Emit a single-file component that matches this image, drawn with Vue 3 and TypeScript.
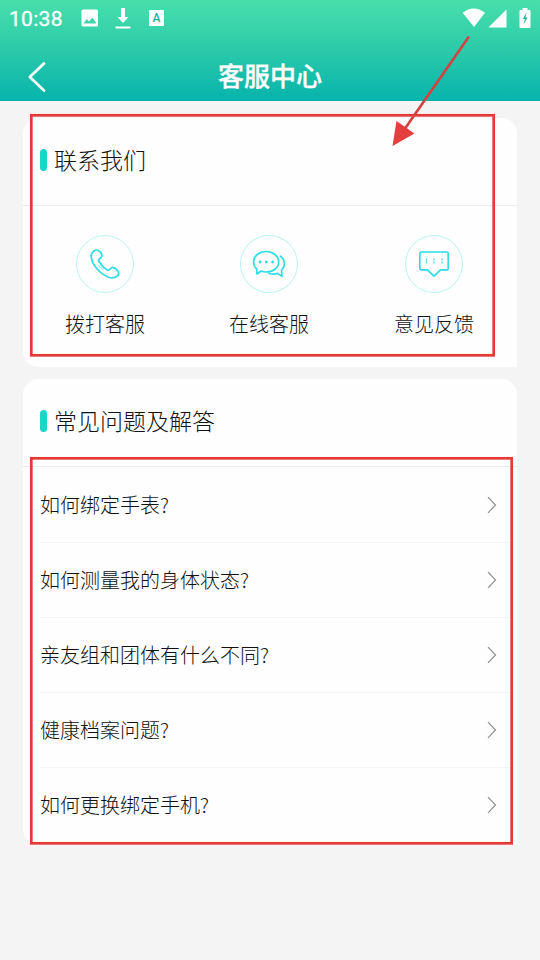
<script setup lang="ts">
interface Contact {
  label: string
  icon: 'phone' | 'chat' | 'feedback'
}

const contacts: Contact[] = [
  { label: '拨打客服', icon: 'phone' },
  { label: '在线客服', icon: 'chat' },
  { label: '意见反馈', icon: 'feedback' },
]

const questions: string[] = [
  '如何绑定手表?',
  '如何测量我的身体状态?',
  '亲友组和团体有什么不同?',
  '健康档案问题?',
  '如何更换绑定手机?',
]
</script>

<template>
  <div class="page">
    <header class="top">
      <div class="status">
        <span class="time">10:38</span>
        <svg class="s-image" width="18" height="18" viewBox="0 0 18 18">
          <path fill="#fff" fill-rule="evenodd" d="M2 .5h13.500a1.500 1.500 0 0 1 1.500 1.500v14a1.500 1.500 0 0 1-1.500 1.500H2A1.500 1.500 0 0 1 .5 16V2A1.500 1.500 0 0 1 2 .5zM2.500 14.500h13l-4.200-6-3.300 4-2.200-2.500z" />
        </svg>
        <svg class="s-down" width="16" height="21" viewBox="0 0 16 21">
          <path fill="#fff" d="M6 0h4v9h3.500L8 15 2.500 9H6zM.5 18.500h15v2H.5z" />
        </svg>
        <span class="s-letter">A</span>
        <span class="grow"></span>
        <svg class="s-wifi" width="24" height="20" viewBox="0 0 24 20">
          <path fill="#fff" d="M.7 4.800Q11.500-3.800 23 4.800L12 19z" />
        </svg>
        <svg class="s-signal" width="19" height="19" viewBox="0 0 19 19">
          <path fill="#fff" d="M18.500.5v18H.3z" />
        </svg>
        <svg class="s-battery" width="12" height="21" viewBox="0 0 12 21">
          <path fill="#fff" d="M3.500 0h5v2H10.500q1 0 1 1v16q0 1-1 1H1.500q-1 0-1-1V3q0-1 1-1h2z" />
          <path fill="#28b99b" d="M7.500 4.500 3.800 11h2L4.700 16.500 8.600 9.500H6.500z" />
        </svg>
      </div>
      <div class="nav">
        <svg class="back" width="20" height="32" viewBox="0 0 20 32">
          <path d="M17 2.500 2.800 16 17 29.500" fill="none" stroke="#fff" stroke-width="2.700" stroke-linecap="round" stroke-linejoin="round" />
        </svg>
        <h1>客服中心</h1>
      </div>
    </header>

    <main>
      <section class="card contact">
        <h2><i class="mark"></i><span>联系我们</span></h2>
        <div class="contacts">
          <div v-for="c in contacts" :key="c.icon" class="item">
            <span class="ring">
              <svg v-if="c.icon === 'phone'" width="32" height="32" viewBox="0 0 32 32">
                <path class="line" d="M7.200 2C4.500 2.500 2.200 5.500 2.200 8.500c.5 8 8.500 17.300 17.300 20.700 4 1.400 9.500.2 10.200-3.500.3-2.500-3.500-6-6-6.400-2-.2-2.500 2.600-4.700 3.200C16.500 21.500 11 15.500 9.500 12.500c.4-2 3.600-2.800 3.500-5C12.700 5 9.800 1.700 7.200 2z" />
                <path class="thin" d="m9 17 4.800 5M11.500 17l3.500 4" />
              </svg>
              <svg v-else-if="c.icon === 'chat'" width="34" height="30" viewBox="0 0 34 30">
                <path class="line" d="M4.800 20C2.500 18 1.600 15.500 1.600 13 1.600 7 7.200 2.500 14 2.500S26.700 7 26.700 13 21 23 14 23c-1.800 0-3.300-.3-4.800-1L5 25z" />
                <path class="line" d="M28.500 7.200c3 2.500 4.200 5.500 3.800 9-.2 2-1.200 3.700-2.800 5l.5 6-4.500-2.800c-3 .9-6 .8-8.500.1" />
                <g fill="#2ddce5"><circle cx="8" cy="13" r="1.400" /><circle cx="14.300" cy="13" r="1.400" /><circle cx="20.600" cy="13" r="1.400" /></g>
              </svg>
              <svg v-else width="32" height="30" viewBox="0 0 32 30">
                <path class="line" d="M3.500 3h25q1.700 0 1.700 1.700v14.500q0 1.700-1.700 1.700H22.500L16 27.200 9.500 20.900h-6q-1.700 0-1.700-1.700V4.700Q1.800 3 3.500 3z" />
                <path class="dashes" d="M8.500 9.500v5M16 9.500v5M24 9.500v5" />
              </svg>
            </span>
            <span class="label">{{ c.label }}</span>
          </div>
        </div>
      </section>

      <section class="card faq">
        <h2><i class="mark"></i><span>常见问题及解答</span></h2>
        <ul>
          <li v-for="q in questions" :key="q">
            <span>{{ q }}</span>
            <svg width="10" height="18" viewBox="0 0 10 18">
              <path d="M1 1.200 8.600 9 1 16.800" fill="none" stroke="#8b8b8b" stroke-width="1.100" />
            </svg>
          </li>
        </ul>
      </section>
    </main>

    <svg class="annotations" width="540" height="960" viewBox="0 0 540 960">
      <g fill="none" stroke="#e53935" stroke-width="2.700">
        <rect x="31.300" y="115.300" width="462.400" height="240" />
        <rect x="31.300" y="458.300" width="480.400" height="385" />
        <path d="M469 36.500 404 130" stroke="#d04443" />
      </g>
      <path d="M392.500 146 396.500 121 414.500 133.500z" fill="#e53e3e" />
    </svg>
  </div>
</template>

<style>
body {
  background: #f4f4f4;
}
</style>

<style scoped>
.page {
  position: relative;
  width: 540px;
  height: 960px;
  overflow: hidden;
  background: #f4f4f4;
  color: #111;
  font-family: "Noto Sans CJK SC", sans-serif;
  font-weight: 300;
}
.top {
  height: 101px;
  background: linear-gradient(#49dfaa, #29c9aa 52%, #07b3ac);
}
.status {
  display: flex;
  height: 36px;
  align-items: center;
  padding: 0 9px 0 9px;
}
.time {
  width: 72px;
  color: #fff;
  font: 400 21px/36px Roboto, sans-serif;
  letter-spacing: 0.3px;
  padding-top: 2px;
  -webkit-text-stroke: 0.3px #fff;
}
.s-down {
  margin-left: 16px;
}
.s-letter {
  display: block;
  width: 15px;
  height: 16px;
  margin-left: 18px;
  border-radius: 1px;
  background: #fff;
  color: #25af9d;
  font: 500 12px/16px Roboto, sans-serif;
  text-align: center;
}
.grow {
  flex: 1;
}
.s-signal {
  margin-left: 2px;
}
.s-battery {
  margin-left: 12px;
}
.nav {
  display: grid;
  grid-template-columns: 46px 1fr 46px;
  height: 65px;
  align-items: center;
}
.back {
  margin: 16px 0 0 27px;
}
h1 {
  margin: 12px 0 0;
  color: #fff;
  font-size: 26px;
  line-height: 38px;
  font-weight: 500;
  text-align: center;
  -webkit-text-stroke: 0.3px #fff;
}
main {
  display: flex;
  flex-direction: column;
  gap: 12px;
  padding: 17px 23px 0;
}
.card {
  background: #fefefe;
  border-radius: 15px;
}
.contact {
  height: 249px;
  border-bottom-right-radius: 0;
}
h2 {
  display: flex;
  box-sizing: border-box;
  height: 88px;
  align-items: center;
  gap: 7px;
  margin: 0;
  padding: 0 0 3px 17px;
  border-bottom: 1px solid #ebebeb;
  font-size: 23px;
  font-weight: 300;
}
h2 span {
  padding-bottom: 2px;
}
.mark {
  width: 7px;
  height: 22px;
  border-radius: 4px;
  background: #1cd5c9;
}
.contacts {
  display: grid;
  grid-template-columns: 164px 165px 80px;
  padding: 29px 0 0 42px;
}
.item {
  display: flex;
  width: 80px;
  flex-direction: column;
  align-items: center;
}
.ring {
  display: grid;
  box-sizing: border-box;
  width: 58px;
  height: 58px;
  place-items: center;
  border: 1px solid #b9f4f1;
  border-radius: 50%;
}
.line {
  fill: none;
  stroke: #2ddce5;
  stroke-width: 1.7;
  stroke-linejoin: round;
  stroke-linecap: round;
}
.thin {
  fill: none;
  stroke: #6ce6ec;
  stroke-width: 0.8;
}
.dashes {
  fill: none;
  stroke: #2ddce5;
  stroke-width: 1.2;
  stroke-dasharray: 2 1;
}
.label {
  margin-top: 16px;
  font-size: 20px;
  line-height: 30px;
  white-space: nowrap;
}
.faq {
  height: 465px;
  border-bottom-right-radius: 0;
}
ul {
  margin: 0;
  padding: 1px 6px 0 17px;
  list-style: none;
}
li {
  display: flex;
  box-sizing: border-box;
  height: 75px;
  align-items: center;
  justify-content: space-between;
  padding-right: 14px;
  border-bottom: 1px solid #f4f4f4;
  font-size: 20px;
}
li span {
  padding-bottom: 2px;
}
li:last-child {
  border-bottom-color: transparent;
}
.annotations {
  position: absolute;
  top: 0;
  left: 0;
  pointer-events: none;
}
</style>
